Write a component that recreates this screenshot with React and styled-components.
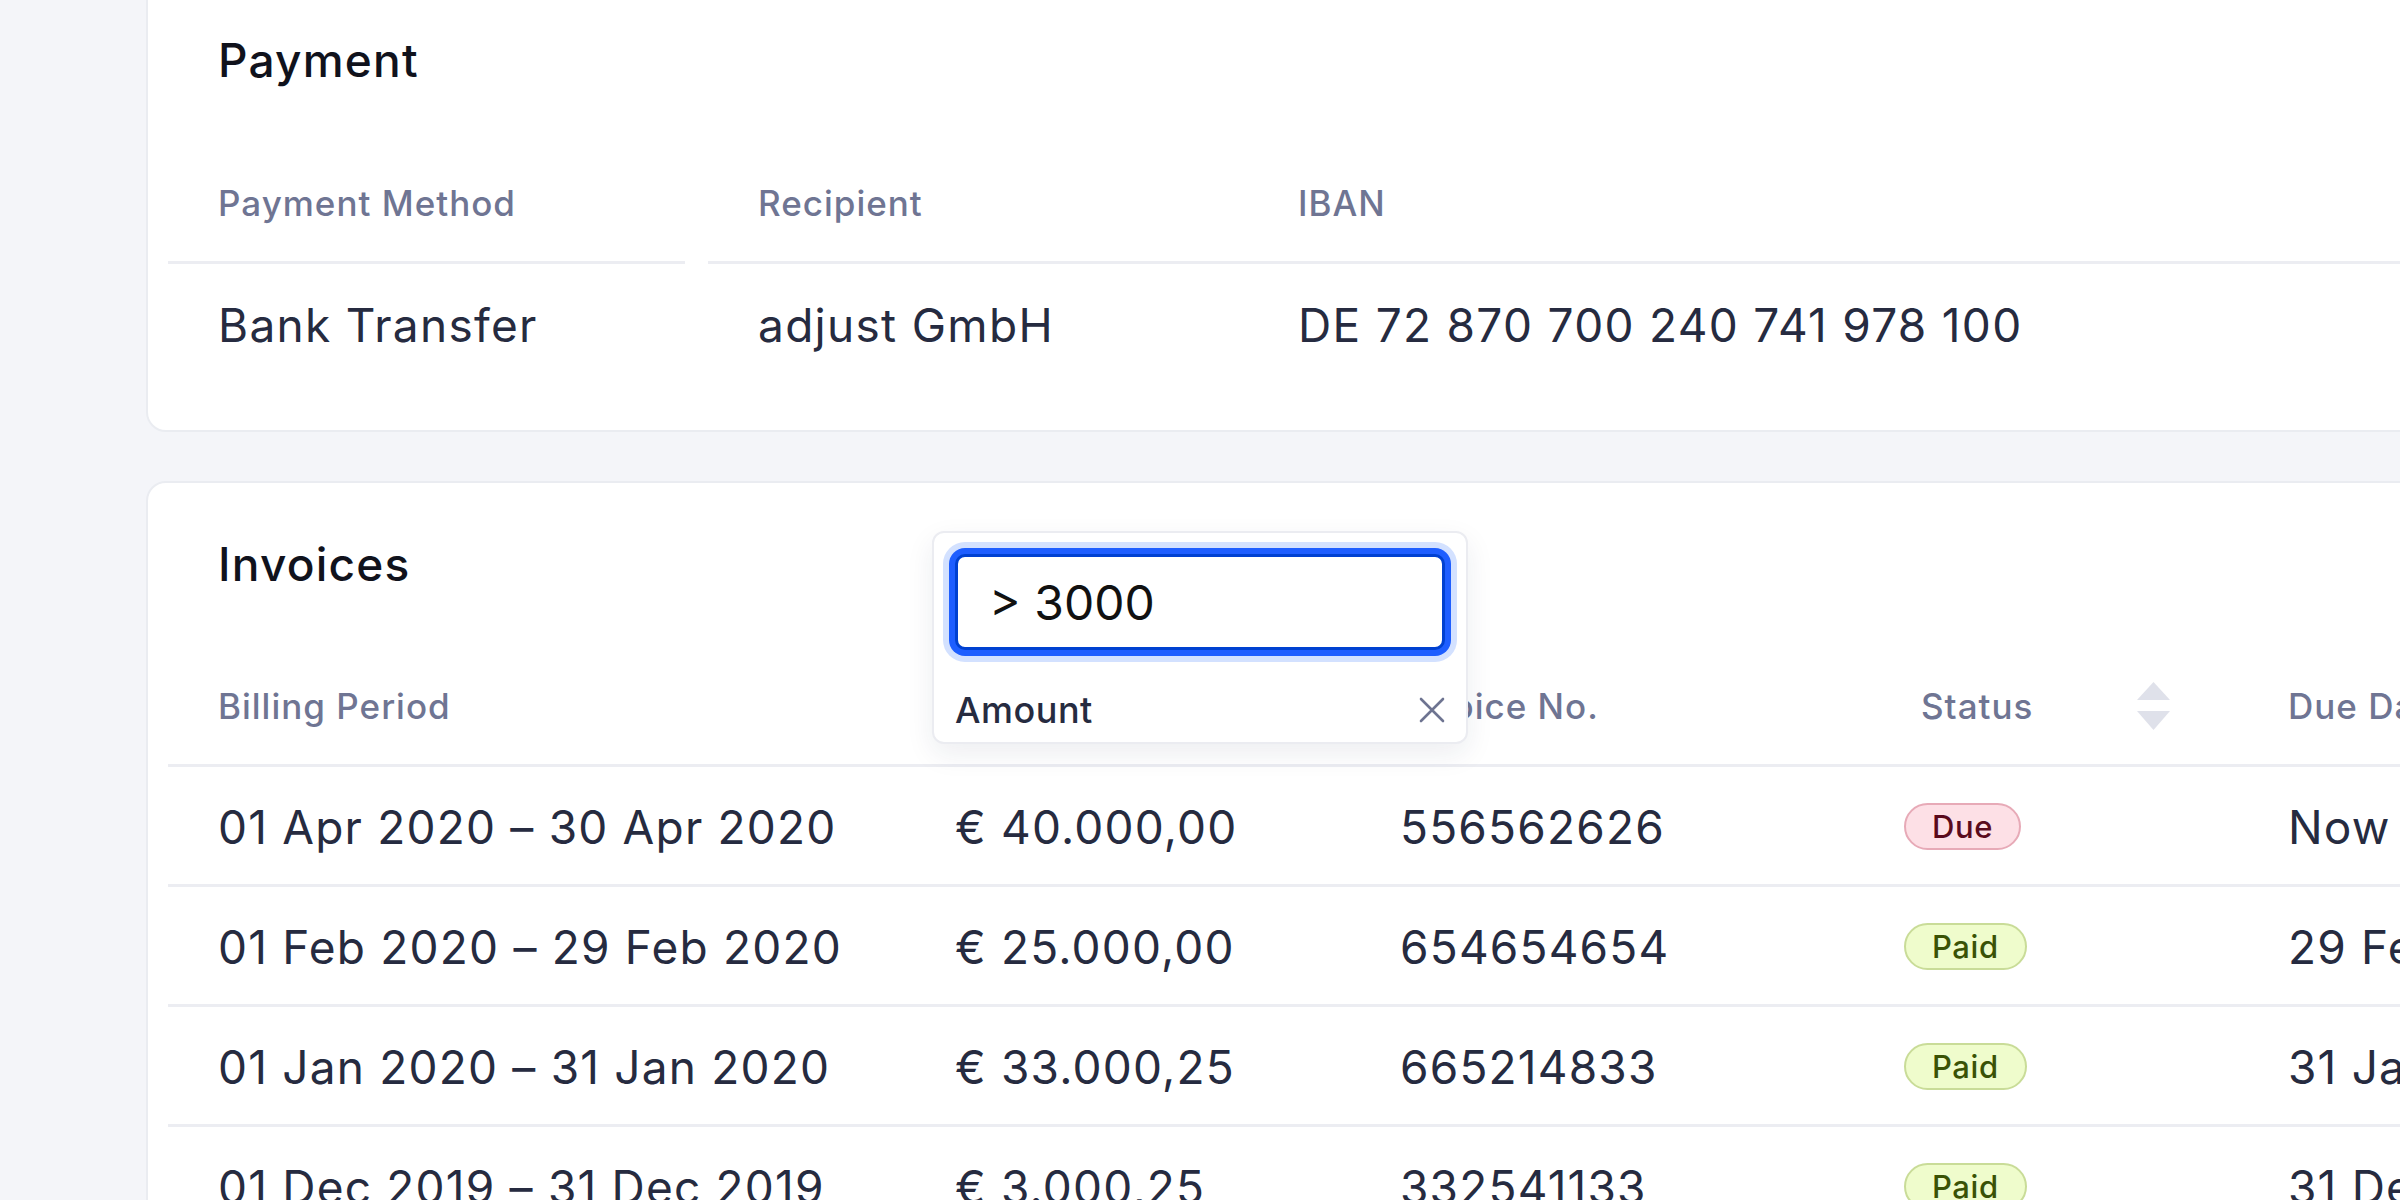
import styled, { createGlobalStyle } from 'styled-components'

const GlobalStyle = createGlobalStyle`
  html, body {
    margin: 0;
    padding: 0;
    background: #f4f5f9;
    overflow: hidden;
    font-family: Inter, "Noto Sans", sans-serif;
  }
  * { box-sizing: border-box; }
`

const invoices = [
  { period: '01 Apr 2020 – 30 Apr 2020', amount: '€ 40.000,00', number: '556562626', status: 'Due', due: 'Now' },
  { period: '01 Feb 2020 – 29 Feb 2020', amount: '€ 25.000,00', number: '654654654', status: 'Paid', due: '29 Feb 2020' },
  { period: '01 Jan 2020 – 31 Jan 2020', amount: '€ 33.000,25', number: '665214833', status: 'Paid', due: '31 Jan 2020' },
  { period: '01 Dec 2019 – 31 Dec 2019', amount: '€ 3.000,25', number: '332541133', status: 'Paid', due: '31 Dec 2019' },
]

function SortIcon() {
  return (
    <svg width="33" height="48" viewBox="0 0 33 48">
      <polygon points="16.5,0 33,18 0,18" fill="#dfe1ea" />
      <polygon points="0,29 33,29 16.5,48" fill="#dfe1ea" />
    </svg>
  )
}

function CloseIcon() {
  return (
    <svg width="26" height="26" viewBox="0 0 26 26">
      <path d="M2 2 L24 24 M24 2 L2 24" stroke="#6e7491" strokeWidth="2.6" strokeLinecap="round" />
    </svg>
  )
}

export default function App() {
  return (
    <>
      <GlobalStyle />
      <Page>
        <Card>
          <Title>Payment</Title>
          <InfoGrid>
            <InfoLabel $gap={23}>Payment Method</InfoLabel>
            <InfoLabel>Recipient</InfoLabel>
            <InfoLabel>IBAN</InfoLabel>
            <InfoValue>Bank Transfer</InfoValue>
            <InfoValue>adjust GmbH</InfoValue>
            <InfoValue>DE 72 870 700 240 741 978 100</InfoValue>
          </InfoGrid>
          <CardFoot />
        </Card>

        <Card>
          <Title>Invoices</Title>
          <Table>
            <HeadCell>Billing Period</HeadCell>
            <HeadCell $overlay>
              Amount
              <FilterPopup>
                <FilterInput defaultValue="> 3000" />
                <FilterRow>
                  <FilterName>Amount</FilterName>
                  <CloseIcon />
                </FilterRow>
              </FilterPopup>
            </HeadCell>
            <HeadCell>Invoice No.</HeadCell>
            <HeadCell $indent={17}>
              Status
              <SortSlot>
                <SortIcon />
              </SortSlot>
            </HeadCell>
            <HeadCell>Due Date</HeadCell>

            {invoices.map((row) => (
              <Row key={row.number}>
                <Cell>{row.period}</Cell>
                <Cell>{row.amount}</Cell>
                <Cell>{row.number}</Cell>
                <Cell>
                  <Badge $kind={row.status}>{row.status}</Badge>
                </Cell>
                <Cell>{row.due}</Cell>
              </Row>
            ))}
          </Table>
        </Card>
      </Page>
    </>
  )
}

const Page = styled.div`
  display: flex;
  flex-direction: column;
  gap: 49px;
  padding-left: 146px;
  margin-top: -23px;
  height: 1300px;
`

const Card = styled.section`
  width: 2500px;
  background: #fff;
  border: 2px solid #eaecf1;
  border-radius: 20px;
  padding: 55px 0 0 20px;
`

const Title = styled.h2`
  margin: 0 0 57px 50px;
  font-size: 46px;
  line-height: 53px;
  font-weight: 500;
  letter-spacing: 1.2px;
  color: #10121c;
`

const InfoGrid = styled.div`
  display: grid;
  grid-template-columns: 540px 540px 1fr;
`

const InfoLabel = styled.div`
  height: 120px;
  display: flex;
  align-items: center;
  padding-left: 50px;
  margin-right: ${(p) => p.$gap || 0}px;
  border-bottom: 3px solid #ecedf2;
  font-size: 35px;
  font-weight: 500;
  letter-spacing: 1px;
  color: #6f7593;
`

const InfoValue = styled.div`
  height: 122px;
  display: flex;
  align-items: center;
  padding-left: 50px;
  font-size: 46px;
  letter-spacing: 1.3px;
  color: #262b40;
`

const CardFoot = styled.div`
  height: 44px;
`

const Table = styled.div`
  display: grid;
  grid-template-columns: 737px 445px 504px 384px 1fr;
`

const HeadCell = styled.div`
  position: ${(p) => (p.$overlay ? 'relative' : 'static')};
  height: 119px;
  display: flex;
  align-items: center;
  padding-left: ${(p) => 50 + (p.$indent || 0)}px;
  border-bottom: 3px solid #ecedf2;
  font-size: 35px;
  font-weight: 500;
  letter-spacing: 1px;
  color: #6f7593;
`

const SortSlot = styled.span`
  display: flex;
  margin-left: auto;
  margin-right: 68px;
`

const Row = styled.div`
  display: contents;
`

const Cell = styled.div`
  height: 120px;
  display: flex;
  align-items: center;
  padding: 2px 0 0 50px;
  border-bottom: 3px solid #ecedf2;
  font-size: 46px;
  letter-spacing: 1.2px;
  color: #262b40;
  white-space: nowrap;
`

const Badge = styled.span`
  display: inline-flex;
  align-items: center;
  height: 47px;
  padding: 0 26px;
  border-radius: 24px;
  font-size: 31px;
  font-weight: 500;
  letter-spacing: 0.6px;
  border: 2px solid ${(p) => (p.$kind === 'Due' ? '#e7aab7' : '#c9dc98')};
  background: ${(p) => (p.$kind === 'Due' ? '#fde0e6' : '#effccc')};
  color: ${(p) => (p.$kind === 'Due' ? '#5a0b1d' : '#3a5206')};
`

const FilterPopup = styled.div`
  position: absolute;
  left: 27px;
  top: -117px;
  width: 536px;
  height: 213px;
  padding: 21px 21px 0 21px;
  background: #fff;
  border: 2px solid #ebecf1;
  border-radius: 12px;
  box-shadow: 0 10px 28px rgba(30, 40, 80, 0.08);
  display: flex;
  flex-direction: column;
  z-index: 2;
`

const FilterInput = styled.input`
  width: 100%;
  height: 96px;
  padding: 0 0 0 31px;
  border: 3px solid #0041d1;
  border-radius: 10px;
  box-shadow: 0 0 0 6px #1e5eff, 0 0 0 12px #d3e1ff;
  outline: none;
  font-family: Inter, sans-serif;
  font-size: 48px;
  color: #111;
  background: #fff;
`

const FilterRow = styled.div`
  height: 64px;
  margin-top: 28px;
  display: flex;
  align-items: center;
  justify-content: space-between;
`

const FilterName = styled.span`
  font-size: 36px;
  font-weight: 500;
  letter-spacing: 0.5px;
  color: #262b40;
`
